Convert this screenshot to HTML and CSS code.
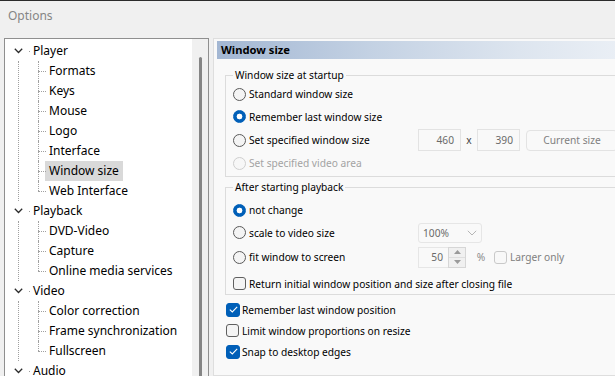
FILE: index.html
```html
<!DOCTYPE html>
<html>
<head>
<meta charset="utf-8">
<title>Options</title>
<link rel="stylesheet" href="styles.css">
</head>
<body>
<div class="titlebar">Options</div>
<div class="main">
  <div class="tree">
    <div class="tree-list">
      <div class="node">
        <div class="row top"><span class="chev"><svg width="9" height="6" viewBox="0 0 9 6"><path d="M0.8 0.8 L4.5 4.5 L8.2 0.8" fill="none" stroke="#2a2a2a" stroke-width="1.3"/></svg></span><span class="hdot"></span><span class="label">Player</span></div>
        <div class="kids">
          <div class="row kid"><span class="label">Formats</span></div>
          <div class="row kid"><span class="label">Keys</span></div>
          <div class="row kid"><span class="label">Mouse</span></div>
          <div class="row kid"><span class="label">Logo</span></div>
          <div class="row kid"><span class="label">Interface</span></div>
          <div class="row kid"><span class="label selected">Window size</span></div>
          <div class="row kid last"><span class="label">Web Interface</span></div>
        </div>
      </div>
      <div class="node">
        <div class="row top"><span class="chev"><svg width="9" height="6" viewBox="0 0 9 6"><path d="M0.8 0.8 L4.5 4.5 L8.2 0.8" fill="none" stroke="#2a2a2a" stroke-width="1.3"/></svg></span><span class="hdot"></span><span class="label">Playback</span></div>
        <div class="kids">
          <div class="row kid"><span class="label">DVD-Video</span></div>
          <div class="row kid"><span class="label">Capture</span></div>
          <div class="row kid last"><span class="label">Online media services</span></div>
        </div>
      </div>
      <div class="node">
        <div class="row top"><span class="chev"><svg width="9" height="6" viewBox="0 0 9 6"><path d="M0.8 0.8 L4.5 4.5 L8.2 0.8" fill="none" stroke="#2a2a2a" stroke-width="1.3"/></svg></span><span class="hdot"></span><span class="label">Video</span></div>
        <div class="kids">
          <div class="row kid"><span class="label">Color correction</span></div>
          <div class="row kid"><span class="label">Frame synchronization</span></div>
          <div class="row kid last"><span class="label">Fullscreen</span></div>
        </div>
      </div>
      <div class="node">
        <div class="row top"><span class="chev"><svg width="9" height="6" viewBox="0 0 9 6"><path d="M0.8 0.8 L4.5 4.5 L8.2 0.8" fill="none" stroke="#2a2a2a" stroke-width="1.3"/></svg></span><span class="hdot"></span><span class="label">Audio</span></div>
      </div>
    </div>
    <div class="scrollbar"><div class="thumb"></div></div>
  </div>

  <div class="panel">
    <div class="header">Window size</div>
    <div class="content">
      <fieldset class="group g1">
        <legend>Window size at startup</legend>
        <div class="opt r1"><span class="radio"></span><span class="lbl">Standard window size</span></div>
        <div class="opt r2"><span class="radio on"></span><span class="lbl">Remember last window size</span></div>
        <div class="opt r3"><span class="radio"></span><span class="lbl">Set specified window size</span>
          <span class="num">460</span><span class="times">x</span><span class="num">390</span><span class="btn">Current size</span></div>
        <div class="opt r4 disabled"><span class="radio"></span><span class="lbl">Set specified video area</span></div>
      </fieldset>

      <fieldset class="group g2">
        <legend>After starting playback</legend>
        <div class="opt s1"><span class="radio on"></span><span class="lbl">not change</span></div>
        <div class="opt s2"><span class="radio"></span><span class="lbl">scale to video size</span>
          <span class="combo"><span class="ctext">100%</span><svg width="10" height="6" viewBox="0 0 10 6"><path d="M0.8 0.8 L5 5 L9.2 0.8" fill="none" stroke="#b5b5b5" stroke-width="1"/></svg></span></div>
        <div class="opt s3"><span class="radio"></span><span class="lbl">fit window to screen</span>
          <span class="spin"><span class="stext">50</span><span class="sbtns"><span class="sb"><svg width="7" height="4" viewBox="0 0 7 4"><path d="M0 4 L3.5 0 L7 4Z" fill="#9a9a9a"/></svg></span><span class="sb"><svg width="7" height="4" viewBox="0 0 7 4"><path d="M0 0 L3.5 4 L7 0Z" fill="#9a9a9a"/></svg></span></span></span>
          <span class="pct">%</span>
          <span class="check dis"></span><span class="dlbl">Larger only</span></div>
        <div class="opt s4"><span class="check"></span><span class="lbl">Return initial window position and size after closing file</span></div>
      </fieldset>

      <div class="checks">
        <div class="copt"><span class="check on"><svg width="9" height="7" viewBox="0 0 9 7"><path d="M0.8 3.6 L3.3 6 L8.2 0.9" fill="none" stroke="#fff" stroke-width="1.1"/></svg></span><span>Remember last window position</span></div>
        <div class="copt"><span class="check"></span><span>Limit window proportions on resize</span></div>
        <div class="copt"><span class="check on"><svg width="9" height="7" viewBox="0 0 9 7"><path d="M0.8 3.6 L3.3 6 L8.2 0.9" fill="none" stroke="#fff" stroke-width="1.1"/></svg></span><span>Snap to desktop edges</span></div>
      </div>
    </div>
  </div>
</div>
</body>
</html>
```

FILE: styles.css
```css
* { box-sizing: border-box; }
html, body { margin: 0; padding: 0; }
body {
  width: 615px;
  height: 376px;
  overflow: hidden;
  background: #f0f0f0;
  border-top: 1px solid #2b2b2b;
  font-family: "Noto Sans", sans-serif;
  font-size: 12px;
  line-height: 16px;
  color: #000;
}
.titlebar {
  height: 37px;
  padding-left: 8px;
  line-height: 29px;
  color: #858585;
}
.main {
  display: flex;
  padding-left: 4px;
  height: 338px;
}

/* tree */
.tree {
  flex: none;
  width: 205px;
  height: 360px;
  border: 1px solid #8f8f8f;
  background: #fff;
  display: flex;
}
.tree-list {
  flex: 1;
  padding-top: 2px;
  overflow: hidden;
}
.scrollbar {
  flex: none;
  width: 16px;
  background: #f0f0f0;
  display: flex;
  justify-content: center;
  padding-top: 18px;
  padding-left: 1px;
}
.thumb {
  width: 3px;
  height: 400px;
  background: #858585;
  border-radius: 2px;
}
.row {
  height: 20px;
  display: flex;
  align-items: center;
  white-space: nowrap;
  position: relative;
}
.top .chev {
  width: 9px;
  height: 6px;
  margin-left: 9px;
  display: flex;
}
.top .hdot {
  width: 1px;
  height: 1px;
  background: #9a9a9a;
  margin-left: 6px;
}
.top .label { margin-left: 3px; }
.kids {
  margin-left: 13px;
  border-left: 1px dotted #a0a0a0;
}
.kid { padding-left: 26px; }
.kid::before {
  content: "";
  position: absolute;
  left: 19px;
  top: 10px;
  width: 8px;
  border-top: 1px dotted #a0a0a0;
}
.kid::after {
  content: "";
  position: absolute;
  left: 19px;
  top: 0;
  height: 20px;
  border-left: 1px dotted #a0a0a0;
}
.kid.last::after { height: 10px; }
.kid .label {
  height: 20px;
  line-height: 20px;
  padding: 0 4px;
}
.label.selected { background: #d9d9d9; }

/* right panel */
.panel {
  flex: none;
  width: 440px;
  margin-left: 4px;
  border: 1px solid #dedede;
  background: #f9f9f9;
  padding: 2px 3px;
  font-size: 10.2px;
}
.header {
  height: 18px;
  line-height: 18px;
  padding-left: 4px;
  font-weight: bold;
  font-size: 11.2px;
  background: linear-gradient(90deg, #a3b7d3 0%, #c3d1e3 35%, #dde5ef 70%, #eef2f7 100%);
}
.content { padding-left: 8px; }
.group {
  margin: 0;
  border: 1px solid #dcdcdc;
  padding: 0 0 2px 7px;
  min-width: 0;
}
.group legend {
  padding: 0 2px;
  line-height: 16px;
}
.g1 { margin-top: 8px; }
.g2 { margin-top: 2px; padding-top: 4px; padding-bottom: 0; }
.opt {
  display: flex;
  align-items: center;
  height: 22px;
  white-space: nowrap;
}
.opt.r1 { height: 22px; }
.opt.r2 { height: 23px; }
.opt.r3 { height: 24px; }
.opt.r4 { height: 22px; }
.opt.s1 { height: 22px; }
.opt.s2 { height: 23px; }
.opt.s3 { height: 26px; }
.opt.s4 { height: 24px; padding-top: 3px; }
.radio {
  flex: none;
  width: 13px;
  height: 13px;
  border-radius: 50%;
  border: 1px solid #5a5a5a;
  background: #f4f4f4;
  margin-right: 3px;
}
.radio.on {
  border-color: #005fb8;
  background: radial-gradient(circle, #fff 0 2.6px, #005fb8 3.2px);
}
.opt .lbl { flex: 0 0 169px; }
.opt.s4 .lbl { flex: none; }
.disabled .radio { border-color: #cfcfcf; background: #f7f7f7; }
.disabled .lbl { color: #a3a3a3; }
.num {
  flex: none;
  width: 43px;
  height: 22px;
  line-height: 20px;
  border: 1px solid #e3e3e3;
  text-align: right;
  padding-right: 6px;
  color: #6a6a6a;
}
.times {
  flex: none;
  width: 16px;
  text-align: center;
  color: #444;
}
.btn {
  flex: none;
  width: 92px;
  height: 21px;
  line-height: 19px;
  margin-left: 6px;
  border: 1px solid #e3e3e3;
  border-radius: 4px;
  text-align: center;
  color: #808080;
}
.combo {
  flex: none;
  width: 64px;
  height: 20px;
  border: 1px solid #e6e6e6;
  border-radius: 3px;
  display: flex;
  align-items: center;
  justify-content: space-between;
  padding: 0 4px 0 4px;
  color: #6a6a6a;
}
.spin {
  flex: none;
  width: 48px;
  height: 21px;
  border: 1px solid #e6e6e6;
  display: flex;
  color: #6a6a6a;
}
.stext {
  flex: 1;
  text-align: right;
  padding-right: 5px;
  line-height: 19px;
}
.sbtns {
  flex: none;
  width: 18px;
  display: flex;
  flex-direction: column;
  border: 1px solid #d6d6d6;
  margin: -1px -1px -1px 0;
  background: #f0f0f0;
}
.sb {
  flex: 1;
  display: flex;
  align-items: center;
  justify-content: center;
}
.sb + .sb { border-top: 1px solid #dedede; }
.pct {
  flex: none;
  width: 28px;
  text-align: center;
  color: #8a8a8a;
  padding-left: 2px;
}
.check {
  flex: none;
  width: 13px;
  height: 13px;
  border: 1px solid #5f5f5f;
  border-radius: 3px;
  background: #f4f4f4;
  margin-right: 3px;
  display: flex;
  align-items: center;
  justify-content: center;
}
.check.on {
  width: 14px;
  height: 14px;
  border-color: #005fb8;
  background: #005fb8;
  margin-right: 2px;
}
.check.dis { border-color: #c9c9c9; background: #f8f8f8; }
.dlbl { color: #808080; }
.checks {
  margin-top: 4px;
  padding-left: 1px;
}
.copt {
  display: flex;
  align-items: center;
  height: 21px;
  white-space: nowrap;
}
```
